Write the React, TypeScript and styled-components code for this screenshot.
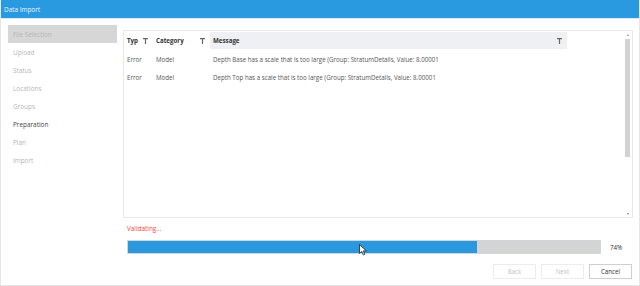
import styled, { createGlobalStyle } from "styled-components";

const Global = createGlobalStyle`
  html, body { margin: 0; padding: 0; background: #ffffff; }
  body { font-family: "Open Sans", "Noto Sans", sans-serif; }
`

const Window = styled.div`
  width: 640px;
  height: 286px;
  box-sizing: border-box;
  border: 1px solid #e6e6e6;
  border-top: none;
  display: flex;
  flex-direction: column;
  overflow: hidden;
  font-size: 6.2px;
`

const TitleBar = styled.div`
  height: 18px;
  background: #2a9ae0;
  color: #eaf5fd;
  display: flex;
  align-items: center;
  padding-left: 3px;
  font-size: 6.4px;
  border-bottom: 1px solid #d8ecf8;
`

const Body = styled.div`
  flex: 1;
  display: flex;
  padding: 6px 6px 0 7px;
`

const Sidebar = styled.div`
  width: 109px;
  display: flex;
  flex-direction: column;
`

const NavItem = styled.div<{ $selected?: boolean; $active?: boolean }>`
  height: 18px;
  display: flex;
  align-items: center;
  padding-left: 5px;
  background: ${p => (p.$selected ? "#d6d6d6" : "transparent")};
  color: ${p => (p.$active ? "#444" : "#b6b6b6")};
  font-size: 6.4px;
`

const Main = styled.div`
  flex: 1;
  margin-left: 6px;
  display: flex;
  flex-direction: column;
  padding-top: 5px;
`

const Table = styled.div`
  height: 188px;
  border: 1px solid #e8e8e8;
  display: flex;
  box-sizing: border-box;
`

const Grid = styled.div`
  flex: 1;
  display: flex;
  flex-direction: column;
`

const HeaderRow = styled.div`
  display: grid;
  grid-template-columns: 29px 57px 357px 54px;
  height: 17px;
  margin-top: 1px;
`

const HeadCell = styled.div<{ $blank?: boolean }>`
  display: flex;
  align-items: center;
  justify-content: space-between;
  padding: 0 5px 0 3px;
  background: ${p => (p.$blank ? "#ffffff" : "#eef0f4")};
  font-weight: 700;
  color: #333;
`

const Rows = styled.div`
  padding-top: 1px;
`

const Row = styled.div`
  display: grid;
  grid-template-columns: 29px 57px 357px;
  height: 18px;
  align-items: center;
  color: #555;
`

const Cell = styled.div`
  padding-left: 3px;
  white-space: nowrap;
`

const Scroll = styled.div`
  width: 9px;
  display: flex;
  flex-direction: column;
  align-items: center;
  padding-top: 1px;
`

const Arrow = styled.div<{ $down?: boolean }>`
  width: 0;
  height: 0;
  border-left: 1.5px solid transparent;
  border-right: 1.5px solid transparent;
  ${p => (p.$down ? "border-top: 2px solid #888;" : "border-bottom: 2px solid #888;")}
  margin: 2px 0;
`

const Thumb = styled.div`
  width: 5px;
  height: 118px;
  background: #d2d2d2;
  margin-top: 1px;
`

const Spacer = styled.div`
  flex: 1;
`

const Status = styled.div`
  color: #f04848;
  font-size: 6.4px;
  margin: 6px 0 0 4px;
  height: 9px;
`

const ProgressRow = styled.div`
  display: flex;
  align-items: center;
  margin: 7px 0 0 4px;
`

const Track = styled.div`
  width: 474px;
  height: 14px;
  box-sizing: border-box;
  background: #d4d4d4;
  border: 1px solid #d0d6dc;
`

const Fill = styled.div`
  height: 100%;
  background: #2a98dc;
`

const Percent = styled.div`
  margin-left: 9px;
  color: #333;
`

const Buttons = styled.div`
  display: flex;
  justify-content: flex-end;
  gap: 5px;
  margin-top: 10px;
  padding-right: 1px;
`

const Button = styled.div<{ $disabled?: boolean }>`
  width: 43px;
  height: 15px;
  box-sizing: border-box;
  display: flex;
  align-items: center;
  justify-content: center;
  border: 1px solid ${p => (p.$disabled ? "#ececec" : "#cfcfcf")};
  color: ${p => (p.$disabled ? "#c4c4c4" : "#333")};
  background: #fff;
`

const Filter = () => (
  <svg width="5" height="6" viewBox="0 0 5 6">
    <path d="M0 0H5V1.2H3.1V6H1.9V1.2H0Z" fill="#666" />
  </svg>
)

const Cursor = styled.svg`
  position: absolute;
  left: 359px;
  top: 244px;
`

const rows = [
  "Depth Base has a scale that is too large (Group: StratumDetails, Value: 8.00001",
  "Depth Top has a scale that is too large (Group: StratumDetails, Value: 8.00001",
]

const steps = ["File Selection", "Upload", "Status", "Locations", "Groups", "Preparation", "Plan", "Import"]

export default function App() {
  const progress = 74
  return (
    <>
      <Global />
      <Window>
        <TitleBar>Data Import</TitleBar>
        <Body>
          <Sidebar>
            {steps.map(s => (
              <NavItem key={s} $selected={s === "File Selection"} $active={s === "Preparation"}>
                {s}
              </NavItem>
            ))}
          </Sidebar>
          <Main>
            <Table>
              <Grid>
                <HeaderRow>
                  <HeadCell $blank>Typ <Filter /></HeadCell>
                  <HeadCell $blank>Category <Filter /></HeadCell>
                  <HeadCell>Message <Filter /></HeadCell>
                  <HeadCell $blank />
                </HeaderRow>
                <Rows>
                  {rows.map((m, i) => (
                    <Row key={i}>
                      <Cell>Error</Cell>
                      <Cell>Model</Cell>
                      <Cell>{m}</Cell>
                    </Row>
                  ))}
                </Rows>
              </Grid>
              <Scroll>
                <Arrow />
                <Thumb />
                <Spacer />
                <Arrow $down />
              </Scroll>
            </Table>
            <Status>Validating...</Status>
            <ProgressRow>
              <Track>
                <Fill style={{ width: `${progress}%` }} />
              </Track>
              <Percent>{progress}%</Percent>
            </ProgressRow>
            <Buttons>
              <Button $disabled>Back</Button>
              <Button $disabled>Next</Button>
              <Button>Cancel</Button>
            </Buttons>
          </Main>
        </Body>
      </Window>
      <Cursor width="8" height="12" viewBox="0 0 8 12">
        <path d="M0.5 0.5V9.5L2.8 7.4L4.4 11L5.8 10.4L4.3 6.9H7.3Z" fill="#fff" stroke="#222" strokeWidth="0.8" />
      </Cursor>
    </>
  )
}
